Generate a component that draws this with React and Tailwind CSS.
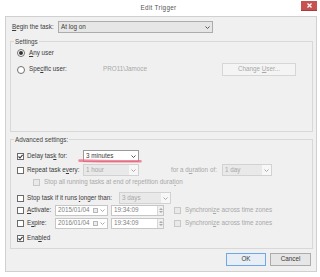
import React from "react";

const Arrow = ({ color = "#555" }) => (
  <svg width="5" height="3" viewBox="0 0 5 3">
    <path d="M0.5 0.5 L2.5 2.5 L4.5 0.5" stroke={color} strokeWidth="1" fill="none" />
  </svg>
);

const Check = ({ checked, disabled }) => (
  <span
    className={`w-[7px] h-[7px] border flex items-center justify-center shrink-0 ${
      disabled ? "border-[#c8c8c8] bg-[#e9e9e9]" : "border-[#6b6b6b] bg-white"
    }`}
  >
    {checked && (
      <svg width="5" height="5" viewBox="0 0 5 5">
        <path d="M0.5 2.5 L2 4 L4.6 0.8" stroke="#333" strokeWidth="1.1" fill="none" />
      </svg>
    )}
  </span>
);

const Radio = ({ checked }) => (
  <span className="w-[8px] h-[8px] rounded-full border border-[#707070] bg-white flex items-center justify-center shrink-0">
    {checked && <span className="w-[4px] h-[4px] rounded-full bg-[#333]" />}
  </span>
);

const Combo = ({ value, className, disabled }) => (
  <div
    className={`h-full border flex items-center ${className} ${
      disabled ? "border-[#d2d2d2] text-[#a8a8a8]" : "border-[#9a9a9a] bg-white text-[#3a3a3a]"
    }`}
  >
    <span className={`flex-1 h-full flex items-center pl-[2px] ${disabled ? "bg-[#e9e9e9]" : ""}`}>
      {value}
    </span>
    <span className={`w-[9px] h-full flex items-center justify-center ${disabled ? "bg-[#f7f7f7]" : ""}`}>
      <Arrow color={disabled ? "#aaa" : "#555"} />
    </span>
  </div>
);

const DateBox = ({ value }) => (
  <div className="w-[53px] h-full border border-[#c6c6c6] bg-white flex items-center text-[#808080]">
    <span className="flex-1 pl-[2px]">{value}</span>
    <span className="w-[5px] h-[5px] border border-[#b8b8b8] bg-[#ececec] mr-[2px]" />
    <span className="mr-[2px]">
      <Arrow color="#aaa" />
    </span>
  </div>
);

const TimeBox = ({ value }) => (
  <div className="w-[53px] h-full border border-[#c6c6c6] bg-white flex items-center text-[#808080]">
    <span className="flex-1 pl-[2px]">{value}</span>
    <span className="w-[6px] h-full border-l border-[#d8d8d8] bg-[#f0f0f0] flex flex-col items-center justify-center gap-[1px]">
      <svg width="4" height="2" viewBox="0 0 4 2">
        <path d="M0 2 L2 0 L4 2 Z" fill="#aaa" />
      </svg>
      <svg width="4" height="2" viewBox="0 0 4 2">
        <path d="M0 0 L2 2 L4 0 Z" fill="#aaa" />
      </svg>
    </span>
  </div>
);

const Group = ({ title, className, children }) => (
  <div className={`ml-[4px] mr-[3px] border border-[#d8d8d8] flex flex-col ${className}`}>
    <span className="-mt-[4px] ml-[3px] px-[1px] w-fit leading-[7px] bg-[#f0f0f0] text-[#444]">
      {title}
    </span>
    {children}
  </div>
);

export default function App() {
  return (
    <div className="w-[320px] h-[277px] bg-white flex flex-col font-['Liberation_Sans',Arial,sans-serif] text-[6.3px] leading-none text-[#3a3a3a] overflow-hidden">
      {/* Title bar */}
      <div className="h-[16px] shrink-0 flex items-start">
        <div className="flex-1 pt-[5px] text-center text-[#555] tracking-[0.3px] pl-[16px]">Edit Trigger</div>
        <div className="w-[16px] h-[10px] mt-[1px] mr-[3px] bg-[#c75050] border-b border-[#a83a3a] flex items-center justify-center">
          <svg width="5" height="5" viewBox="0 0 5 5">
            <path d="M0.5 0.5 L4.5 4.5 M4.5 0.5 L0.5 4.5" stroke="#fff" strokeWidth="1.3" />
          </svg>
        </div>
      </div>

      {/* Dialog body */}
      <div className="flex-1 ml-[5px] mr-[3px] mb-[5px] bg-[#f0f0f0] border border-[#d0d0d0] flex flex-col">
        <div className="mt-[4px] h-[12px] flex items-center pl-[6px]">
          <span className="w-[46px]">
            <span className="underline">B</span>egin the task:
          </span>
          <div className="w-[155px] h-full border border-[#acacac] bg-[#e6e6e6] flex items-center">
            <span className="flex-1 pl-[2px]">At log on</span>
            <span className="w-[9px] flex justify-center">
              <Arrow />
            </span>
          </div>
        </div>

        {/* Settings */}
        <Group title="Settings" className="mt-[8px] h-[91px]">
          <div className="mt-[3px] h-[10px] flex items-center pl-[6px] gap-[4px]">
            <Radio checked />
            <span>
              <span className="underline">A</span>ny user
            </span>
          </div>
          <div className="mt-[5px] h-[13px] flex items-center pl-[6px] pr-[16px]">
            <Radio />
            <span className="ml-[4px] w-[74px]">
              Spe<span className="underline">c</span>ific user:
            </span>
            <span className="text-[#a8a8a8]">PRO11\Jamoce</span>
            <div className="ml-auto w-[74px] h-full border border-[#d6d6d6] bg-[#f4f4f4] text-[#a8a8a8] flex items-center justify-center">
              Change&nbsp;<span className="underline">U</span>ser...
            </div>
          </div>
        </Group>

        {/* Advanced settings */}
        <Group title="Advanced settings:" className="mt-[7px] h-[110px]">
          <div className="mt-[7px] h-[12px] flex items-center pl-[6px]">
            <Check checked />
            <span className="ml-[3px] w-[56px]">
              Delay tas<span className="underline">k</span> for:
            </span>
            <div className="relative h-full">
              <Combo value="3 minutes" className="w-[56px]" />
              <svg
                className="absolute left-[-5px] top-[9px]"
                width="64"
                height="4"
                viewBox="0 0 64 4"
              >
                <path
                  d="M1.5 1.6 Q 30 2.6 62.5 2.2"
                  stroke="#f0647f"
                  strokeOpacity="0.75"
                  strokeWidth="2.6"
                  strokeLinecap="round"
                  fill="none"
                />
              </svg>
            </div>
          </div>

          <div className="mt-[2px] h-[12px] flex items-center pl-[6px]">
            <Check />
            <span className="ml-[3px] w-[56px]">
              Repeat task e<span className="underline">v</span>ery:
            </span>
            <Combo value="1 hour" className="w-[56px]" disabled />
            <span className="ml-[32px] w-[51px] text-[#a8a8a8]">
              for a d<span className="underline">u</span>ration of:
            </span>
            <Combo value="1 day" className="w-[50px]" disabled />
          </div>

          <div className="mt-[1px] h-[10px] flex items-center pl-[22px]">
            <Check disabled />
            <span className="ml-[4px] text-[#a8a8a8]">
              Stop all running tasks at end of repetition durat<span className="underline">i</span>on
            </span>
          </div>

          <div className="mt-[5px] h-[12px] flex items-center pl-[6px]">
            <Check />
            <span className="ml-[3px] w-[92px]">
              Stop task if it runs <span className="underline">l</span>onger than:
            </span>
            <Combo value="3 days" className="w-[52px]" disabled />
          </div>

          <div className="mt-[1px] h-[11px] flex items-center pl-[6px]">
            <Check />
            <span className="ml-[3px] w-[28px]">
              <span className="underline">A</span>ctivate:
            </span>
            <DateBox value="2015/01/04" />
            <span className="w-[3px]" />
            <TimeBox value="19:34:09" />
            <span className="ml-[10px]">
              <Check disabled />
            </span>
            <span className="ml-[4px] text-[#a8a8a8]">
              Synchroni<span className="underline">z</span>e across time zones
            </span>
          </div>

          <div className="mt-[2px] h-[11px] flex items-center pl-[6px]">
            <Check />
            <span className="ml-[3px] w-[28px]">
              E<span className="underline">x</span>pire:
            </span>
            <DateBox value="2016/01/04" />
            <span className="w-[3px]" />
            <TimeBox value="19:34:09" />
            <span className="ml-[10px]">
              <Check disabled />
            </span>
            <span className="ml-[4px] text-[#a8a8a8]">
              Synchroni<span className="underline">z</span>e across time zones
            </span>
          </div>

          <div className="mt-[5px] h-[8px] flex items-center pl-[6px]">
            <Check checked />
            <span className="ml-[3px]">
              Ena<span className="underline">b</span>led
            </span>
          </div>
        </Group>

        <div className="mt-[4px] h-[13px] flex justify-end gap-[4px] pr-[5px]">
          <div className="w-[40px] h-full border border-[#6fa8e8] bg-[#e8eef6] flex items-center justify-center">
            OK
          </div>
          <div className="w-[41px] h-full border border-[#acacac] bg-[#e6e6e6] flex items-center justify-center">
            Cancel
          </div>
        </div>
      </div>
    </div>
  );
}
